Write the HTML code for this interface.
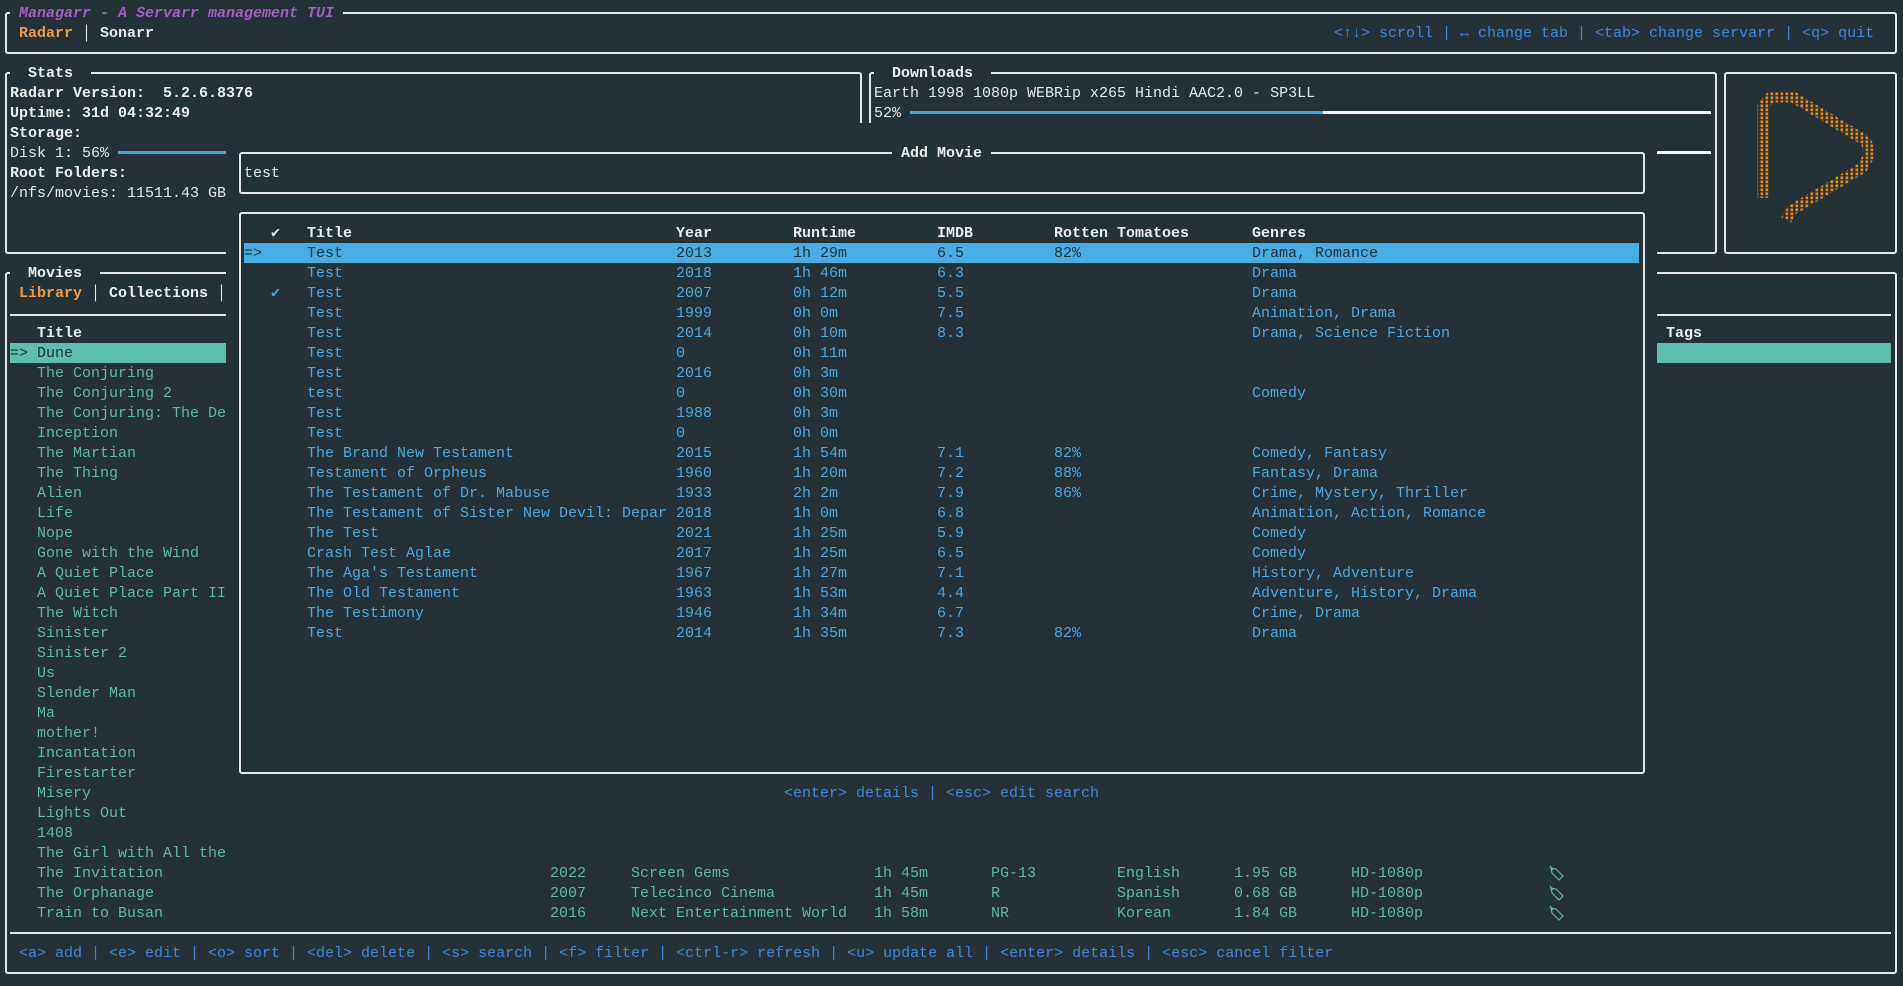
<!DOCTYPE html>
<html><head><meta charset="utf-8"><style>
html,body{margin:0;padding:0;background:#243137;width:1903px;height:986px;overflow:hidden;position:relative}
.t{position:absolute;white-space:pre;line-height:20px;height:20px;font-family:"Liberation Mono","DejaVu Sans Mono",monospace;font-size:15px;color:#e8e8e8}
.b{font-weight:bold}
.box{position:absolute;border:2px solid #e6e6e6;border-radius:3px;box-sizing:content-box}
.bg{background:#243137}
.w{color:#eeeeee;font-weight:bold}
.bl{color:#4aa8df}
.hb{color:#3c86dc}
.tl{color:#5cb9a2}
.ln{position:absolute;height:2px;background:#e6e6e6}
</style></head><body>

<!-- top box -->
<div class="box" style="left:4.5px;top:12px;width:1888px;height:38px"></div>
<div class="t bg b" style="left:10px;top:4px;color:#a25ec4;font-style:italic"> Managarr - A Servarr management TUI </div>
<div class="t b" style="left:19px;top:24px;color:#f29a48">Radarr</div>
<div class="t" style="left:82px;top:24px">│</div>
<div class="t b" style="left:100px;top:24px">Sonarr</div>
<div class="t hb" style="left:1334px;top:24px">&lt;↑↓&gt; scroll | ↔ change tab | &lt;tab&gt; change servarr | &lt;q&gt; quit</div>

<!-- stats -->
<div class="box" style="left:4.5px;top:72px;width:853px;height:178px"></div>
<div class="t bg w" style="left:10px;top:64px">  Stats  </div>
<div class="t w" style="left:10px;top:84px">Radarr Version:  5.2.6.8376</div>
<div class="t w" style="left:10px;top:104px">Uptime: 31d 04:32:49</div>
<div class="t w" style="left:10px;top:124px">Storage:</div>
<div class="t" style="left:10px;top:144px">Disk 1: 56%</div>
<div class="ln" style="left:118px;top:151px;width:120px;height:3px;background:#3fa6e0"></div>
<div class="t w" style="left:10px;top:164px">Root Folders:</div>
<div class="t" style="left:10px;top:184px">/nfs/movies: 11511.43 GB</div>

<!-- downloads -->
<div class="box" style="left:868.5px;top:72px;width:844px;height:178px"></div>
<div class="t bg w" style="left:874px;top:64px">  Downloads  </div>
<div class="t" style="left:874px;top:84px">Earth 1998 1080p WEBRip x265 Hindi AAC2.0 - SP3LL</div>
<div class="t" style="left:874px;top:104px">52%</div>
<div class="ln" style="left:910px;top:111px;width:413px;height:3px;background:#3fa6e0"></div>
<div class="ln" style="left:1323px;top:111px;width:388px;height:3px;background:#f4f4f4"></div>
<div class="ln" style="left:1600px;top:151px;width:111px;height:3px;background:#f4f4f4"></div>

<!-- logo -->
<div class="box" style="left:1723.5px;top:72px;width:169px;height:178px"></div>
<svg style="position:absolute;left:1723px;top:72px" width="180" height="180" viewBox="1723 72 180 180">
<defs><pattern id="p" x="0" y="0" width="5" height="4" patternUnits="userSpaceOnUse"><rect x="0.5" y="0.5" width="2.7" height="2.7" fill="#ec8a1e"/></pattern></defs>
<g fill="none" stroke="url(#p)" stroke-width="11" stroke-linejoin="round">
<path d="M1763,198 L1763,106 L1771,97 L1793,97 L1866,141 L1870,154 L1862,168 L1792,210 L1786,220"/>
</g>
</svg>

<!-- movies -->
<div class="box" style="left:4.5px;top:272px;width:1888px;height:698px"></div>
<div class="t bg w" style="left:10px;top:264px">  Movies  </div>
<div class="t b" style="left:19px;top:284px;color:#f29a48">Library</div>
<div class="t" style="left:91px;top:284px">│</div>
<div class="t w" style="left:109px;top:284px">Collections</div>
<div class="t" style="left:217px;top:284px">│</div>
<div class="ln" style="left:10px;top:314px;width:1881px"></div>
<div class="t w" style="left:37px;top:324px">Title</div>
<div style="position:absolute;left:10px;top:343px;width:216px;height:20px;background:#5dbfab"></div>
<div class="t" style="left:10px;top:344px;color:#22323a">=&gt; Dune</div>
<div class="t tl" style="left:37px;top:364px">The Conjuring
The Conjuring 2
The Conjuring: The De
Inception
The Martian
The Thing
Alien
Life
Nope
Gone with the Wind
A Quiet Place
A Quiet Place Part II
The Witch
Sinister
Sinister 2
Us
Slender Man
Ma
mother!
Incantation
Firestarter
Misery
Lights Out
1408
The Girl with All the
The Invitation
The Orphanage
Train to Busan</div>
<div class="t tl" style="left:550px;top:864px;height:60px">2022
2007
2016</div>
<div class="t tl" style="left:631px;top:864px;height:60px">Screen Gems
Telecinco Cinema
Next Entertainment World</div>
<div class="t tl" style="left:874px;top:864px;height:60px">1h 45m
1h 45m
1h 58m</div>
<div class="t tl" style="left:991px;top:864px;height:60px">PG-13
R
NR</div>
<div class="t tl" style="left:1117px;top:864px;height:60px">English
Spanish
Korean</div>
<div class="t tl" style="left:1234px;top:864px;height:60px">1.95 GB
0.68 GB
1.84 GB</div>
<div class="t tl" style="left:1351px;top:864px;height:60px">HD-1080p
HD-1080p
HD-1080p</div>
<svg style="position:absolute;left:1548px;top:865px" width="20" height="60" viewBox="0 0 20 60" fill="none" stroke="#5cb9a2" stroke-width="1.2">
<g><path d="M3,3 L8,4 L15,11 L11,15 L4,8 Z M2,1 L5,5"/></g>
<g transform="translate(0,20)"><path d="M3,3 L8,4 L15,11 L11,15 L4,8 Z M2,1 L5,5"/></g>
<g transform="translate(0,40)"><path d="M3,3 L8,4 L15,11 L11,15 L4,8 Z M2,1 L5,5"/></g>
</svg>
<div class="ln" style="left:10px;top:932px;width:1881px"></div>
<div class="t hb" style="left:19px;top:944px">&lt;a&gt; add | &lt;e&gt; edit | &lt;o&gt; sort | &lt;del&gt; delete | &lt;s&gt; search | &lt;f&gt; filter | &lt;ctrl-r&gt; refresh | &lt;u&gt; update all | &lt;enter&gt; details | &lt;esc&gt; cancel filter</div>

<div class="t w" style="left:1666px;top:324px">Tags</div>
<div style="position:absolute;left:1657px;top:343px;width:234px;height:20px;background:#5dbfab"></div>

<!-- clear area -->
<div style="position:absolute;left:226px;top:123px;width:1431px;height:740px;background:#243137"></div>

<!-- popup -->
<div class="box" style="left:238.5px;top:152px;width:1402px;height:38px"></div>
<div class="t bg w" style="left:892px;top:144px"> Add Movie </div>
<div class="t" style="left:244px;top:164px">test</div>
<div class="box" style="left:238.5px;top:212px;width:1402px;height:558px"></div>
<div class="t w" style="left:271px;top:224px">✔</div>
<div class="t w" style="left:307px;top:224px">Title</div>
<div class="t w" style="left:676px;top:224px">Year</div>
<div class="t w" style="left:793px;top:224px">Runtime</div>
<div class="t w" style="left:937px;top:224px">IMDB</div>
<div class="t w" style="left:1054px;top:224px">Rotten Tomatoes</div>
<div class="t w" style="left:1252px;top:224px">Genres</div>
<div style="position:absolute;left:244px;top:243px;width:1395px;height:20px;background:#49ade5"></div>
<div class="t" style="left:244px;top:244px;color:#1f2e36">=&gt;</div>
<div class="t bl" style="left:271px;top:284px">✔</div>
<div class="t bl" style="left:307px;top:264px;height:400px">Test
Test
Test
Test
Test
Test
test
Test
Test
The Brand New Testament
Testament of Orpheus
The Testament of Dr. Mabuse
The Testament of Sister New Devil: Depar
The Test
Crash Test Aglae
The Aga's Testament
The Old Testament
The Testimony
Test</div>
<div class="t bl" style="left:676px;top:264px;height:400px">2018
2007
1999
2014
0
2016
0
1988
0
2015
1960
1933
2018
2021
2017
1967
1963
1946
2014</div>
<div class="t bl" style="left:793px;top:264px;height:400px">1h 46m
0h 12m
0h 0m
0h 10m
0h 11m
0h 3m
0h 30m
0h 3m
0h 0m
1h 54m
1h 20m
2h 2m
1h 0m
1h 25m
1h 25m
1h 27m
1h 53m
1h 34m
1h 35m</div>
<div class="t bl" style="left:937px;top:264px;height:400px">6.3
5.5
7.5
8.3





7.1
7.2
7.9
6.8
5.9
6.5
7.1
4.4
6.7
7.3</div>
<div class="t bl" style="left:1054px;top:264px;height:400px">








82%
88%
86%






82%</div>
<div class="t bl" style="left:1252px;top:264px;height:400px">Drama
Drama
Animation, Drama
Drama, Science Fiction


Comedy


Comedy, Fantasy
Fantasy, Drama
Crime, Mystery, Thriller
Animation, Action, Romance
Comedy
Comedy
History, Adventure
Adventure, History, Drama
Crime, Drama
Drama</div>
<div class="t" style="left:307px;top:244px;color:#1f2e36">Test</div>
<div class="t" style="left:676px;top:244px;color:#1f2e36">2013</div>
<div class="t" style="left:793px;top:244px;color:#1f2e36">1h 29m</div>
<div class="t" style="left:937px;top:244px;color:#1f2e36">6.5</div>
<div class="t" style="left:1054px;top:244px;color:#1f2e36">82%</div>
<div class="t" style="left:1252px;top:244px;color:#1f2e36">Drama, Romance</div>
<div class="t hb" style="left:784px;top:784px">&lt;enter&gt; details | &lt;esc&gt; edit search</div>

</body></html>
